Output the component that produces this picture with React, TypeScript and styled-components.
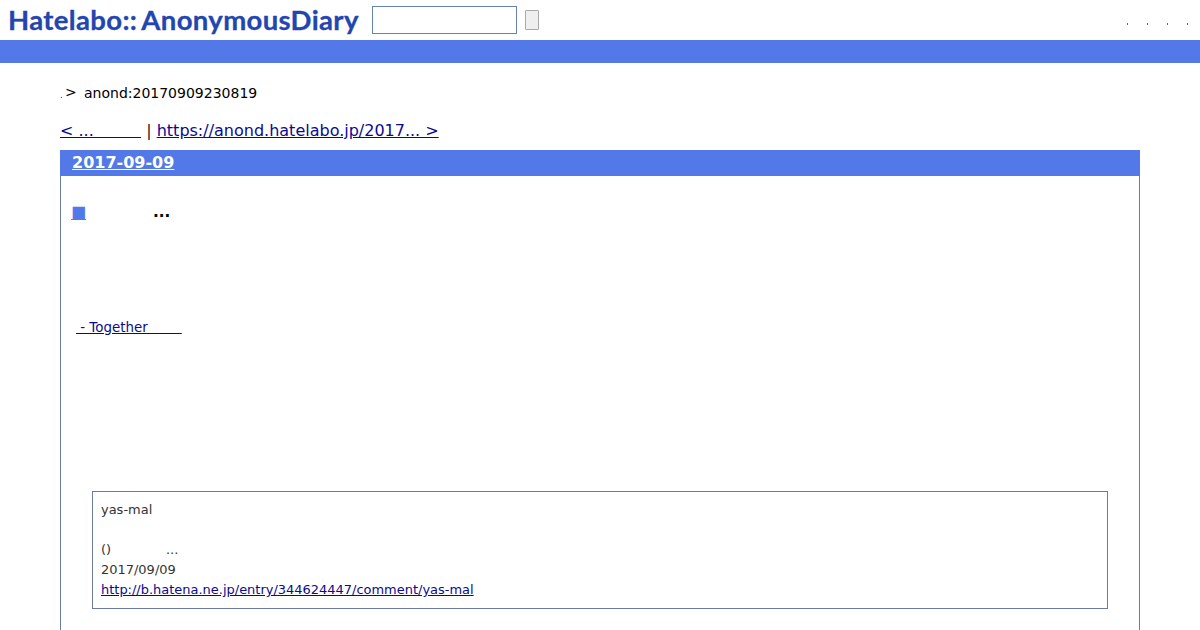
import React from "react";
import styled, { createGlobalStyle } from "styled-components";

const Global = createGlobalStyle`
  html, body { margin: 0; padding: 0; background: #fff; overflow: hidden; height: 630px; }
  body { font-family: "DejaVu Sans", sans-serif; color: #000; }
  #root { height: 630px; overflow: hidden; }
  a { color: #0a0a90; }
`;

const Header = styled.header`
  height: 40px;
  display: flex;
  align-items: flex-start;
`;

const Logo = styled.div`
  font-family: "Lato", sans-serif;
  font-weight: 700;
  font-size: 27.5px;
  letter-spacing: 0.35px;
  word-spacing: -2px;
  line-height: 39px;
  color: #2345b0;
  margin-left: 8px;
  white-space: nowrap;
  width: 364px;
  -webkit-text-stroke: 0.3px #2345b0;
`;

const SearchInput = styled.div`
  box-sizing: border-box;
  width: 145px;
  height: 28px;
  margin-top: 6px;
  border: 1px solid #6583b5;
  background: #fff;
`;

const SearchButton = styled.div`
  box-sizing: border-box;
  width: 14px;
  height: 20px;
  margin: 10px 0 0 8px;
  border: 1px solid #a9a9a9;
  border-radius: 1px;
  background: #efefef;
`;

const Tools = styled.div`
  margin-left: auto;
  margin-right: 12px;
  display: flex;
  gap: 19px;
  padding-top: 23px;
`;

const ToolDot = styled.span`
  display: block;
  width: 1px;
  height: 2px;
  background: #666;
`;

const Band = styled.div`
  height: 23px;
  background: #5279e7;
`;

const Main = styled.main`
  padding: 0 60px;
`;

const Crumbs = styled.div`
  display: flex;
  align-items: baseline;
  height: 20px;
  margin-top: 20px;
  font-size: 14px;
  line-height: 20px;
  color: #000;
`;

const CrumbDot = styled.span`
  font-size: 8px;
  width: 5px;
`;

const CrumbArrow = styled.span`
  width: 19px;
  position: relative;
  top: -1px;
`;

const Pager = styled.div`
  font-size: 16px;
  line-height: 20px;
  margin-top: 18px;
  height: 20px;
  color: #222;
  white-space: pre;
`;

const Section = styled.section`
  margin-top: 9px;
  border: 1px solid #6b7ba5;
  border-top: 0;
  height: 520px;
`;

const DayTitle = styled.h2`
  margin: 0 -1px;
  height: 26px;
  background: #5279e7;
  padding-left: 12px;
  font-size: 16px;
  line-height: 25px;
  font-weight: 700;
  & a { color: #fff; }
`;

const EntryTitle = styled.h3`
  margin: 26px 0 0 10px;
  height: 20px;
  font-size: 15.2px;
  line-height: 20px;
  font-weight: 700;
  display: flex;
  align-items: baseline;
  white-space: pre;
`;

const Square = styled.a`
  color: #5279e7;
  font-weight: 400;
  font-size: 16px;
  width: 82px;
  text-underline-offset: 2px;
`;

const Body = styled.p`
  margin: 96px 0 0 15px;
  font-size: 13.4px;
  line-height: 20px;
  height: 20px;
  white-space: pre;
`;

const Quote = styled.blockquote`
  box-sizing: border-box;
  margin: 153px 31px 0;
  height: 118px;
  padding: 8px;
  border: 1px solid #6b7ba5;
  font-size: 12.98px;
  line-height: 20px;
  color: #333;
  white-space: pre;
`;

const QuoteLine = styled.div`
  height: 20px;
`;

export default function App() {
  return (
    <>
      <Global />
      <Header>
        <Logo>Hatelabo:: AnonymousDiary</Logo>
        <SearchInput />
        <SearchButton />
        <Tools>
          <ToolDot />
          <ToolDot />
          <ToolDot />
          <ToolDot />
        </Tools>
      </Header>
      <Band />
      <Main>
        <Crumbs>
          <CrumbDot>.</CrumbDot>
          <CrumbArrow>&gt;</CrumbArrow>
          <span>anond:20170909230819</span>
        </Crumbs>
        <Pager>
          <a href="#">{"< ...\u00a0\u00a0\u00a0\u00a0\u00a0\u00a0\u00a0\u00a0\u00a0\u200a"}</a>
          {" | "}
          <a href="#">{"https://anond.hatelabo.jp/2017... >"}</a>
        </Pager>
        <Section>
          <DayTitle><a href="#">2017-09-09</a></DayTitle>
          <EntryTitle>
            <Square href="#">■</Square>
            <span>...</span>
          </EntryTitle>
          <Body>
            <a href="#">{"\u00a0- Together\u00a0\u00a0\u00a0\u00a0\u00a0\u00a0\u00a0\u00a0"}</a>
          </Body>
          <Quote>
            <QuoteLine>yas-mal</QuoteLine>
            <QuoteLine />
            <QuoteLine>{"()\u00a0\u00a0\u00a0\u00a0\u00a0\u00a0\u00a0\u00a0\u00a0\u00a0\u00a0\u00a0\u00a0\u200a..."}</QuoteLine>
            <QuoteLine>2017/09/09</QuoteLine>
            <QuoteLine><a href="#">http://b.hatena.ne.jp/entry/344624447/comment/yas-mal</a></QuoteLine>
          </Quote>
        </Section>
      </Main>
    </>
  );
}
